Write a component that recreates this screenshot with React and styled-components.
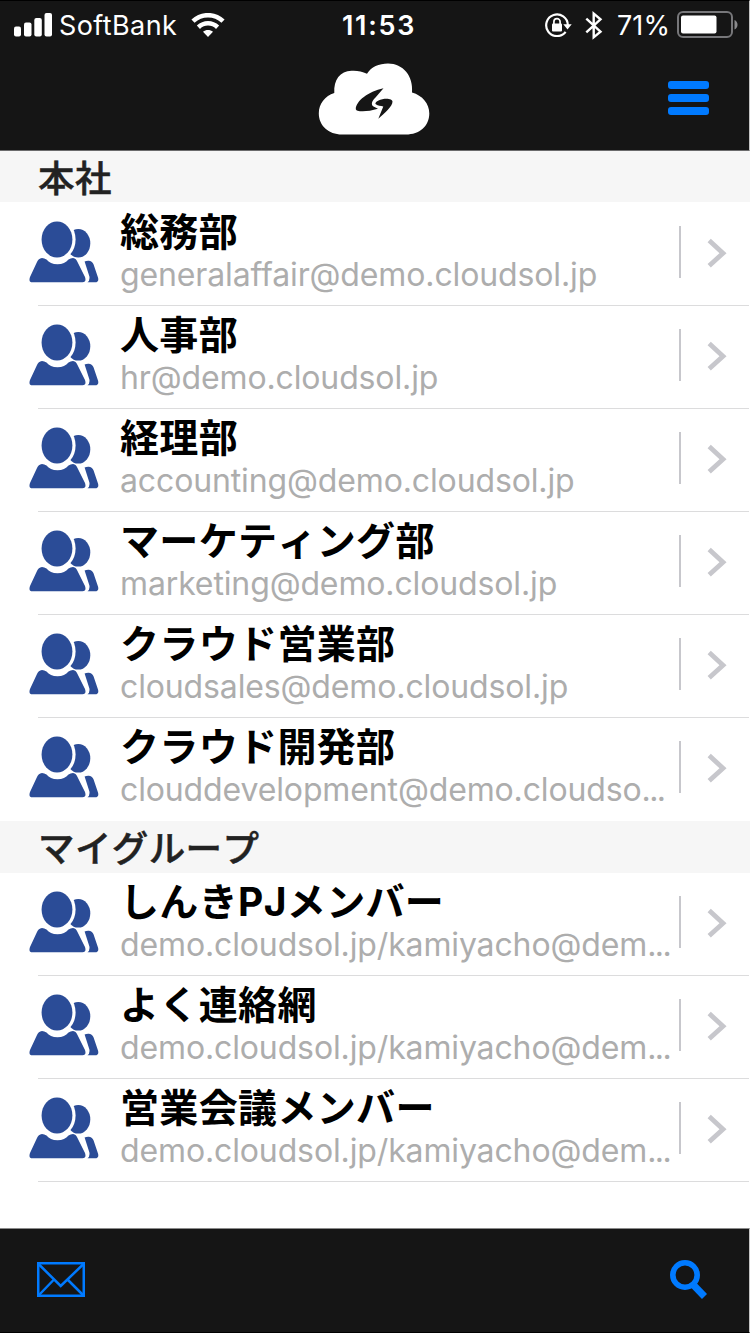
import React from 'react';
import styled, { createGlobalStyle } from 'styled-components';

const GlobalStyle = createGlobalStyle`
  * {
    box-sizing: border-box;
  }
  body {
    margin: 0;
    background: #fff;
    font-family: Inter, 'Noto Sans CJK JP', sans-serif;
  }
  svg {
    display: block;
    flex: none;
  }
`;

const Screen = styled.div`
  width: 750px;
  height: 1333px;
  display: flex;
  flex-direction: column;
  overflow: hidden;
  background: #fff;
`;

const Header = styled.header`
  height: 151px;
  border-top: 1px solid #000;
  border-right: 1px solid #c4c4c4;
  border-bottom: 1px solid #6b6b6c;
  background: #151515;
`;

const StatusBar = styled.div`
  height: 48px;
  padding: 0 10px 0 14px;
  display: grid;
  grid-template-columns: 1fr auto 1fr;
  align-items: center;
  color: #fff;
`;

const StatusGroup = styled.div`
  display: flex;
  align-items: center;
  justify-content: ${({ $end }) => ($end ? 'flex-end' : 'flex-start')};
`;

const StatusText = styled.span`
  padding-top: 2px;
  font-size: 27px;
  line-height: 32px;
  font-weight: ${({ $bold }) => ($bold ? 600 : 400)};
  letter-spacing: ${({ $spacing }) => $spacing || 0}px;
  margin: 0 ${({ $after }) => $after || 0}px 0 ${({ $before }) => $before || 0}px;
`;

const NavBar = styled.div`
  height: 101px;
  padding: 14px 1px 0 0;
  display: grid;
  grid-template-columns: 1fr 112px 1fr;
`;

const MenuButton = styled.button`
  grid-column: 3;
  justify-self: end;
  width: 41px;
  height: 34px;
  margin: 18px 39px 0 0;
  padding: 0;
  border: 0;
  background: none;
  display: flex;
  flex-direction: column;
  justify-content: space-between;
`;

const MenuLine = styled.span`
  width: 100%;
  height: 8px;
  border-radius: 3px;
  background: #007aff;
`;

const Logo = styled.div`
  grid-column: 2;
`;

const List = styled.main`
  flex: 1;
`;

const SectionTitle = styled.h2`
  height: 52px;
  margin: 0;
  padding-left: 38px;
  background: linear-gradient(#f6f6f6, #f6f6f6) 0 0 / 100% ${({ $first }) => ($first ? 51 : 52)}px no-repeat #fff;
  color: #222;
  font-size: 36.5px;
  line-height: 56px;
  font-weight: 500;
  font-kerning: none;
  letter-spacing: 0.4px;
  -webkit-text-stroke: 0.5px #222;
`;

const Row = styled.div`
  height: 103px;
  padding: 0 23px 0 29px;
  display: flex;
  align-items: flex-start;
  background: ${({ $last }) =>
    $last ? '#fff' : 'linear-gradient(#dcdcdd, #dcdcdd) 38px 102px / 711px 1px no-repeat #fff'};
`;

const Avatar = styled.div`
  width: 91px;
  padding-top: 18px;
`;

const Info = styled.div`
  width: 559px;
  padding-top: 6px;
  white-space: nowrap;
`;

const Name = styled.div`
  height: 46px;
  color: #000;
  font-size: 39px;
  line-height: 46px;
  font-weight: 700;
  font-kerning: none;
  letter-spacing: 0.35px;
`;

const Mail = styled.div`
  height: 40px;
  color: #adadad;
  font-size: 32px;
  line-height: 40px;
  letter-spacing: -0.13px;
`;

const Ellipsis = styled.span`
  letter-spacing: -1.6px;
`;

const Divider = styled.div`
  width: 2px;
  height: 52px;
  margin-top: 23px;
  background: #c7c7cc;
`;

const Disclosure = styled.div`
  margin: 35px 0 0 auto;
`;

const Toolbar = styled.footer`
  height: 105px;
  padding: 0 41px 2px 37px;
  display: flex;
  align-items: center;
  justify-content: space-between;
  border-top: 1px solid #8a8a8a;
  border-right: 1px solid #c4c4c4;
  border-bottom: 1px solid #000;
  background: #151515;
`;

const SignalIcon = () => (
  <svg width="38" height="24" viewBox="0 0 38 24" fill="#fff">
    <rect x="0" y="13.5" width="7" height="10" rx="2" />
    <rect x="10" y="9.5" width="7.5" height="14" rx="2" />
    <rect x="20.3" y="5" width="7.5" height="18.5" rx="2" />
    <rect x="30.5" y="0" width="7.5" height="23.5" rx="2" />
  </svg>
);

const WifiIcon = () => (
  <svg width="34" height="24" viewBox="0 0 34 24" fill="none" stroke="#fff" strokeWidth="4.6">
    <path d="M2 8.2C10.5 .2 23.5 .2 32 8.2" />
    <path d="M7.4 14.2c5.6-5.2 13.6-5.2 19.2 0" />
    <path d="M17 24l-5-5.2c2.8-2.5 7.2-2.5 10 0z" fill="#fff" stroke="none" />
  </svg>
);

const RotationLockIcon = () => (
  <svg width="27" height="24" viewBox="0 0 27 24" fill="none" stroke="#fff" strokeWidth="2.2">
    <path d="M20.6 18.8A10.8 10.8 0 1 1 22.8 12" />
    <path d="M18.3 11.2h8.4l-4.2 5.2z" fill="#fff" stroke="none" />
    <rect x="7" y="10.4" width="10" height="8" rx="1" fill="#fff" stroke="none" />
    <path d="M8.9 11V8.8a3.1 3.1 0 0 1 6.2 0V11" strokeWidth="1.7" />
  </svg>
);

const BluetoothIcon = () => (
  <svg width="18" height="29" viewBox="0 0 18 29" fill="none" stroke="#fff" strokeWidth="2.4">
    <path d="M1.3 7.6l14.2 13L8.7 26.3V2.6l6.8 5.8-14.2 13" />
  </svg>
);

const BatteryIcon = () => (
  <svg width="62" height="28" viewBox="0 0 62 28">
    <rect x="1" y="1" width="54" height="25" rx="5" fill="none" stroke="#77777a" strokeWidth="2" />
    <rect x="4" y="4.5" width="35.5" height="18" rx="2" fill="#fff" />
    <path d="M57.5 9c4 1.6 4 7.8 0 9.6z" fill="#8a8a8c" />
  </svg>
);

const CloudLogo = () => (
  <svg width="112" height="72" viewBox="0 0 112 72">
    <path
      d="M24 71.5C10.5 71.5 .8 62.5 .8 50.5C.8 40.5 7 33 16.3 30C15.5 17 22 8 33.5 7.8C39 7.5 44 8.3 49 10.8C53 4 61 .5 70 .5C85 .5 95.5 13 94 29.5C104.5 32.5 111.3 40.5 111.3 50.5C111.3 63 101.5 71.5 88 71.5Z"
      fill="#fff"
    />
    <path
      d="M65.5 25.2C50 28.5 38 38 37.8 46C37.8 49 49 49.2 60 45.8L55.5 43.5C52.5 41.5 54 37.5 57.5 34.5Z"
      fill="#151515"
    />
    <path
      d="M57.8 41.2C56 40 60.5 36.5 66.5 35.8C71 35.3 74.5 36.6 74.5 38.5C74.5 43.5 67 49.5 60.3 55.8L65.3 43.5C62.5 42.7 60.2 42.7 57.8 41.2Z"
      fill="#151515"
    />
  </svg>
);

const PeopleIcon = () => (
  <svg width="70" height="62" viewBox="0 0 70 62" fill="#2b4c97">
    <ellipse cx="49.3" cy="22.3" rx="12" ry="14.3" />
    <ellipse cx="28" cy="18.5" rx="18.6" ry="21.3" fill="#fff" />
    <ellipse cx="28" cy="18.5" rx="15.4" ry="18" />
    <path d="M55.6 40.6Q57.5 39.6 60 39.8C63 40 63.8 42 64.6 43.6L69 56.5Q70.3 61.3 66 61.3H58.5Q61 59.5 60.4 55.5Z" />
    <path d="M13 37Q15.3 37 17.5 38.5C20 41.5 23.5 43.2 28.5 43.2C33.5 43.2 37 41.5 39.5 38.5Q41.5 37 44 37C46.5 37.2 47.5 39 48.5 41L56 56Q57.7 61.3 53.5 61.3H3.5Q-.8 61.3 1 56L8 41C9 39 10.5 37.2 13 37Z" />
  </svg>
);

const ChevronIcon = () => (
  <svg width="20" height="30" viewBox="0 0 20 30" fill="none" stroke="#c7c7cc" strokeWidth="4.8">
    <path d="M2.2 2.6L16 15.2L2.2 27.8" />
  </svg>
);

const MailIcon = () => (
  <svg width="48" height="35" viewBox="0 0 48 35" fill="none" stroke="#007aff" strokeWidth="2.5">
    <rect x="1.25" y="1.25" width="45.5" height="32.5" />
    <path d="M2 2.5L23.7 24L46 2.5M2 33L17 17.5M46 33L30.5 17.5" />
  </svg>
);

const SearchIcon = () => (
  <svg width="38" height="40" viewBox="0 0 38 40" fill="none" stroke="#007aff">
    <circle cx="15" cy="15" r="12.2" strokeWidth="5.6" />
    <path d="M22.5 24L34.5 36.5" strokeWidth="7" />
  </svg>
);

const SECTIONS = [
  {
    title: '本社',
    rows: [
      { name: '総務部', mail: 'generalaffair@demo.cloudsol.jp' },
      { name: '人事部', mail: 'hr@demo.cloudsol.jp' },
      { name: '経理部', mail: 'accounting@demo.cloudsol.jp' },
      { name: 'マーケティング部', mail: 'marketing@demo.cloudsol.jp' },
      { name: 'クラウド営業部', mail: 'cloudsales@demo.cloudsol.jp' },
      { name: 'クラウド開発部', mail: 'clouddevelopment@demo.cloudso', cut: true },
    ],
  },
  {
    title: 'マイグループ',
    rows: [
      { name: 'しんきPJメンバー', mail: 'demo.cloudsol.jp/kamiyacho@dem', cut: true },
      { name: 'よく連絡網', mail: 'demo.cloudsol.jp/kamiyacho@dem', cut: true },
      { name: '営業会議メンバー', mail: 'demo.cloudsol.jp/kamiyacho@dem', cut: true },
    ],
  },
];

const GroupRow = ({ name, mail, cut, last }) => (
  <Row $last={last}>
    <Avatar>
      <PeopleIcon />
    </Avatar>
    <Info>
      <Name>{name}</Name>
      <Mail>
        {mail}
        {cut && <Ellipsis>...</Ellipsis>}
      </Mail>
    </Info>
    <Divider />
    <Disclosure>
      <ChevronIcon />
    </Disclosure>
  </Row>
);

const App = () => (
  <>
    <GlobalStyle />
    <Screen>
      <Header>
        <StatusBar>
          <StatusGroup>
            <SignalIcon />
            <StatusText $before={7} $after={14} $spacing={0.4}>SoftBank</StatusText>
            <WifiIcon />
          </StatusGroup>
          <StatusText $bold $spacing={1.7} $before={5}>11:53</StatusText>
          <StatusGroup $end>
            <RotationLockIcon />
            <StatusText $before={13} />
            <BluetoothIcon />
            <StatusText $before={14} $after={7} $spacing={0.1}>71%</StatusText>
            <BatteryIcon />
          </StatusGroup>
        </StatusBar>
        <NavBar>
          <Logo>
            <CloudLogo />
          </Logo>
          <MenuButton aria-label="menu">
            <MenuLine />
            <MenuLine />
            <MenuLine />
          </MenuButton>
        </NavBar>
      </Header>
      <List>
        {SECTIONS.map((section, i) => (
          <section key={section.title}>
            <SectionTitle $first={i === 0}>{section.title}</SectionTitle>
            {section.rows.map((row, j) => (
              <GroupRow key={row.name} {...row} last={i === 0 && j === section.rows.length - 1} />
            ))}
          </section>
        ))}
      </List>
      <Toolbar>
        <MailIcon />
        <SearchIcon />
      </Toolbar>
    </Screen>
  </>
);

export default App;
